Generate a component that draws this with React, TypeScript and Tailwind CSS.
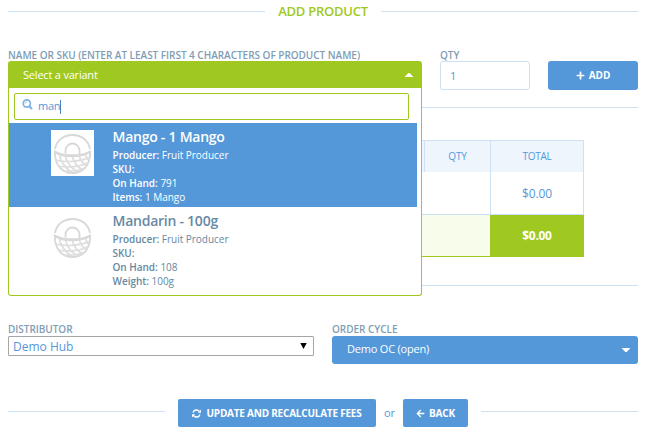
import React from "react";
import { FaArrowLeft, FaPlus } from "react-icons/fa";

const labelClass = "text-[10px] leading-[14px] font-semibold tracking-[-0.03px] text-[#7f9db5] uppercase whitespace-nowrap";

function Basket() {
  return (
    <svg viewBox="0 0 43 46" width="43" height="46" fill="none" stroke="#d8d8d8" strokeWidth="1.800" className="block bg-white">
      <path d="M4 19C5.500 10.500 12.500 5 21.500 5S37.500 10.500 39 19" />
      <path d="M14.500 23.500V20.500A7 7 0 0 1 28.500 20.500V25" />
      <path d="M3.800 21.500C12 26.500 31 26.500 39.200 21.500C39.500 35 32 43 21.500 43S3.500 35 3.800 21.500Z" />
      <path d="M4 22.500C12 28.500 31 27.500 39 22.500" strokeWidth="1.300" />
      <g stroke="#dedede" strokeWidth="1.700">
        <path d="M4.500 30C14 32.500 28 32 38.500 27.500M7 36C16 37.500 28 37 36.500 33M12 41C19 41.500 27 41 32.500 38.500" />
        <path d="M8.500 25C9.500 31 13.500 37 20 42M14.500 26.500C16 32 20 38 26.500 42M21.500 27C22.500 31.500 26 36.500 31 39.500M28.500 26.500C29.500 30 32 33.500 35 35.500M34.500 25L37 30" />
      </g>
    </svg>
  );
}

function RefreshIcon() {
  return (
    <svg width="9" height="9" viewBox="0 0 9 9" fill="none" stroke="white" strokeWidth="1.400">
      <path d="M1.100 3.700A3.500 3.500 0 0 1 7.200 2.200M7.900 5.300A3.500 3.500 0 0 1 1.800 6.800" />
      <path d="M9 0.500V3.700H5.800ZM0 8.500V5.300H3.200Z" fill="white" stroke="none" />
    </svg>
  );
}

type Variant = { name: string; onHand: string; unitLabel: string; unit: string; active?: boolean };

const variants: Variant[] = [
  { name: "Mango - 1 Mango", onHand: "791", unitLabel: "Items:", unit: "1 Mango", active: true },
  { name: "Mandarin - 100g", onHand: "108", unitLabel: "Weight:", unit: "100g" },
];

function VariantRow({ v }: { v: Variant }) {
  return (
    <li className={"flex h-[84px] pl-[42px] pt-[7px] " + (v.active ? "bg-[#5498da] text-white" : "bg-white text-[#6788a2]")}>
      <div className="w-[61.5px] shrink-0"><Basket /></div>
      <div className="text-[10px] leading-[14px] tracking-[-0.02px] whitespace-nowrap">
        <div className="-mt-[3px] mb-[1px] text-[14px] leading-[20px] font-semibold tracking-[-0.25px]">{v.name}</div>
        <div><b className="font-semibold">Producer:</b> Fruit Producer</div>
        <div><b className="font-semibold">SKU:</b></div>
        <div><b className="font-semibold">On Hand:</b> {v.onHand}</div>
        <div><b className="font-semibold">{v.unitLabel}</b> {v.unit}</div>
      </div>
    </li>
  );
}

function VariantSelect() {
  return (
    <div className="relative h-[29px] w-[414px]">
      <div className="flex h-[27px] items-center justify-between rounded-t-[3px] bg-[#9fc820] pt-[2px] pr-[9px] pl-[15px] text-[11px] tracking-[-0.2px] text-white">
        <span>Select a variant</span>
        <svg width="8" height="4" viewBox="0 0 8 4" className="-mt-[1px]"><path d="M0 4V3.500L3.300 0H4.700L8 3.500V4Z" fill="white" /></svg>
      </div>
      <div className="absolute top-[27px] left-0 z-10 h-[208px] w-[414px] rounded-b-[3px] border border-t-0 border-[#9fc820] bg-white pt-[5px]">
        <div className="ml-[5px] flex h-[27px] w-[395px] items-center rounded-[2px] border border-[#9fc820] pl-[7px] text-[11px] tracking-[-0.3px] text-[#5498da]">
          <svg width="11" height="11" viewBox="0 0 11 11" fill="none" stroke="#82b3e4" className="mr-[5px] -mt-[4px]">
            <circle cx="4.800" cy="4.500" r="3.600" strokeWidth="1.700" />
            <path d="M3.200 4.600Q3.400 3 5 2.900" strokeWidth="0.800" />
            <path d="M7.300 7.200L10 10" strokeWidth="2.200" />
          </svg>
          <span>man</span>
          <span className="h-[14px] w-px bg-[#4586c4]" />
        </div>
        <ul className="mt-[3px] w-[408px]">
          {variants.map((v) => <VariantRow key={v.name} v={v} />)}
        </ul>
      </div>
    </div>
  );
}

export default function App() {
  return (
    <main className="h-[437px] w-[650px] overflow-hidden bg-white pr-[12px] pl-[8px] font-['Open_Sans',sans-serif] text-[#5498da]">
      <header className="flex h-[23px] items-center gap-[13px]">
        <span className="h-px flex-1 bg-[#cee1f4]" />
        <h1 className="-mt-[2px] text-[13px] leading-[18px] font-semibold tracking-[-0.25px] text-[#9fc820]">ADD PRODUCT</h1>
        <span className="h-px flex-1 bg-[#cee1f4]" />
      </header>

      <section className="mt-[25px] flex h-[60px] gap-[18px] border-b border-[#cee1f4]">
        <div className="w-[414px]">
          <div className={labelClass + " h-[13px]"}>Name or SKU (enter at least first 4 characters of product name)</div>
          <VariantSelect />
        </div>
        <div className="w-[90px]">
          <div className={labelClass + " h-[13px]"}>Qty</div>
          <div className="flex h-[29px] items-center rounded-[3px] border border-[#cee1f4] pt-[1px] pl-[9px] text-[11px]">1</div>
        </div>
        <button className="mt-[13px] flex h-[29px] w-[90px] items-center justify-center gap-[4px] rounded-[3px] bg-[#5498da] text-[10px] font-bold text-white">
          <FaPlus size={9} /><span>ADD</span>
        </button>
      </section>

      <section className="h-[178px] border-b border-[#cee1f4] pt-[32px] pl-[356px]">
        <div className="grid w-[220px] grid-cols-[60px_66px_94px] grid-rows-[32px_43px_42px] text-center">
          <div className="border-t border-[#cee1f4] bg-[#eff5fc]" />
          <div className="flex items-center justify-center border-t border-l border-[#cee1f4] bg-[#eff5fc] text-[10px] tracking-[-0.2px]">QTY</div>
          <div className="flex items-center justify-center border-x border-t border-[#cee1f4] bg-[#eff5fc] text-[10px] tracking-[-0.3px]">TOTAL</div>
          <div className="col-span-2 border-b border-[#cee1f4]" />
          <div className="flex items-center justify-center border-x border-b border-[#cee1f4] pt-[1px] text-[12px] tracking-[-0.1px]">$0.00</div>
          <div className="col-span-2 border-b border-[#9fc820] bg-[#f7fceb]" />
          <div className="flex items-center justify-center bg-[#9fc820] text-[12px] font-bold tracking-[-0.3px] text-white">$0.00</div>
        </div>
      </section>

      <section className="mt-[36px] flex gap-[18px]">
        <div className="w-[306px]">
          <div className={labelClass + " h-[14px]"}>Distributor</div>
          <div className="flex h-[20px] items-center justify-between rounded-[1px] border border-[#a6a6a6] pr-[6px] pl-[4px] text-[12px]">
            <span className="pt-[1px]">Demo Hub</span>
            <svg width="7" height="6" viewBox="0 0 7 6"><path d="M0.300 0H6.700L3.500 6Z" fill="black" /></svg>
          </div>
        </div>
        <div className="w-[306px]">
          <div className={labelClass + " h-[14px]"}>Order Cycle</div>
          <div className="flex h-[28px] items-center justify-between rounded-[3px] bg-[#5498da] pr-[8px] pl-[15px] text-[11px] tracking-[-0.2px] text-white">
            <span className="-mt-[2px]">Demo OC (open)</span>
            <svg width="8" height="4" viewBox="0 0 8 4"><path d="M0 0H8V0.500L4.700 4H3.300L0 0.500Z" fill="white" /></svg>
          </div>
        </div>
      </section>

      <footer className="mt-[35px] flex h-[28px] items-center text-[11px]">
        <span className="-mt-[3px] h-px w-[157px] bg-[#cee1f4]" />
        <button className="ml-[13px] flex h-[28px] w-[198px] items-center justify-center gap-[5px] rounded-[2px] bg-[#5498da] text-[10px] font-bold tracking-[-0.22px] whitespace-nowrap text-white">
          <RefreshIcon /><span>UPDATE AND RECALCULATE FEES</span>
        </button>
        <span className="w-[27px] text-center">or</span>
        <button className="flex h-[28px] w-[65px] items-center justify-center gap-[4px] rounded-[2px] bg-[#5498da] text-[10px] font-bold tracking-[-0.2px] text-white">
          <FaArrowLeft size={9} /><span>BACK</span>
        </button>
        <span className="-mt-[3px] ml-[13px] h-px flex-1 bg-[#cee1f4]" />
      </footer>
    </main>
  );
}
